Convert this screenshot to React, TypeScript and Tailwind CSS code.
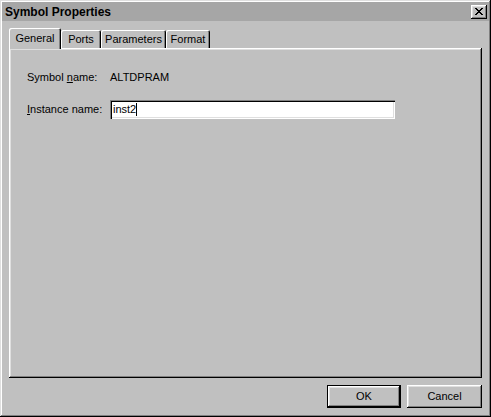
import React from 'react';

const raised =
  'shadow-[inset_-1px_-1px_0_#000,inset_1px_1px_0_#fff,inset_-2px_-2px_0_#808080,inset_2px_2px_0_#dfdfdf]';

const tabs = [
  { label: 'General', width: 'w-[52px]', active: true },
  { label: 'Ports', width: 'w-[40px]', active: false },
  { label: 'Parameters', width: 'w-[65px]', active: false },
  { label: 'Format', width: 'w-[44px]', active: false },
];

const CloseIcon = () => (
  <svg width="8" height="7" viewBox="0 0 8 7" shapeRendering="crispEdges">
    <path d="M0 0h2v1H0zM6 0h2v1H6zM1 1h2v1H1zM5 1h2v1H5zM2 2h4v1H2zM3 3h2v1H3zM2 4h4v1H2zM1 5h2v1H1zM5 5h2v1H5zM0 6h2v1H0zM6 6h2v1H6z" fill="#000" />
  </svg>
);

export default function App() {
  return (
    <div
      className="w-[491px] h-[417px] bg-[#c0c0c0] flex flex-col p-[2px] text-[11px] text-black shadow-[inset_-1px_-1px_0_#000,inset_1px_1px_0_#dfdfdf,inset_-2px_-2px_0_#808080,inset_2px_2px_0_#fff]"
      style={{ fontFamily: '"Liberation Sans", Arial, sans-serif' }}
    >
      {/* title bar */}
      <div className="h-[19px] bg-[#a6a6a6] flex items-center pl-[3px] pr-[2px]">
        <span className="font-bold text-[12px]">Symbol Properties</span>
        <button className={`ml-auto w-[16px] h-[14px] bg-[#c0c0c0] flex items-center justify-center ${raised}`}>
          <CloseIcon />
        </button>
      </div>

      {/* tabs */}
      <div className="flex items-end h-[27px] pl-[7px] relative z-10">
        {tabs.map((t) =>
          t.active ? (
            <div
              key={t.label}
              className={`${t.width} h-[21px] -mb-px bg-[#c0c0c0] rounded-t-[2px] flex items-center justify-center pb-[1px] shadow-[inset_1px_1px_0_#fff,inset_-1px_0_0_#000,inset_-2px_0_0_#808080]`}
            >
              {t.label}
            </div>
          ) : (
            <div
              key={t.label}
              className={`${t.width} h-[18px] bg-[#c0c0c0] rounded-t-[2px] flex items-center justify-center shadow-[inset_1px_1px_0_#fff,inset_-1px_0_0_#000,inset_-2px_0_0_#808080]`}
            >
              {t.label}
            </div>
          )
        )}
      </div>

      {/* panel */}
      <div className="mx-[7px] h-[330px] shadow-[inset_-1px_-1px_0_#000,inset_1px_1px_0_#fff,inset_-2px_-2px_0_#808080,inset_2px_2px_0_#dfdfdf] pl-[18px] pt-[22px]">
        <div className="flex items-center h-[14px]">
          <span className="w-[83px]">
            Symbol <span className="underline">n</span>ame:
          </span>
          <span>ALTDPRAM</span>
        </div>
        <div className="flex items-center mt-[16px]">
          <span className="w-[83px]">
            <span className="underline">I</span>nstance name:
          </span>
          <div className="w-[285px] h-[19px] bg-white flex items-center pl-[3px] shadow-[inset_1px_1px_0_#808080,inset_2px_2px_0_#000,inset_-1px_-1px_0_#fff,inset_-2px_-2px_0_#dfdfdf]">
            <span>inst2</span>
            <span className="w-px h-[13px] bg-black" />
          </div>
        </div>
      </div>

      {/* buttons */}
      <div className="flex justify-end gap-[6px] pr-[7px] mt-[7px]">
        <button className="w-[74px] h-[23px] border border-black bg-[#c0c0c0] flex items-center justify-center">
          <span className={`w-full h-full flex items-center justify-center ${raised}`}>OK</span>
        </button>
        <button className={`w-[75px] h-[23px] bg-[#c0c0c0] flex items-center justify-center ${raised}`}>
          Cancel
        </button>
      </div>
    </div>
  );
}
